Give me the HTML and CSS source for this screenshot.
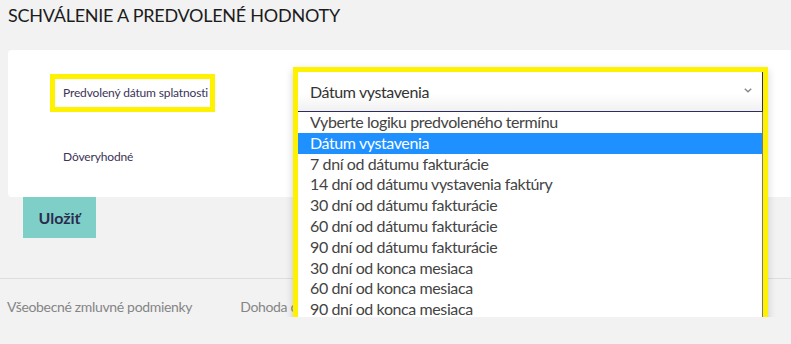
FILE: index.html
```html
<!DOCTYPE html>
<html lang="sk">
<head>
<meta charset="utf-8">
<title>Schválenie a predvolené hodnoty</title>
<link rel="stylesheet" href="styles.css">
</head>
<body>
<h1 class="title">SCHVÁLENIE A PREDVOLENÉ HODNOTY</h1>
<section class="card">
  <div class="label-box">Predvolený dátum splatnosti</div>
  <div class="select-field">
    <div class="annot">
      <div class="select-display">
        <span>Dátum vystavenia</span>
        <svg class="chev" width="8" height="5" viewBox="0 0 8 5"><polyline points="0.8,0.8 4,3.8 7.2,0.8" fill="none" stroke="#8a8a8a" stroke-width="1.5"/></svg>
      </div>
      <ul class="options">
        <li>Vyberte logiku predvoleného termínu</li>
        <li class="active">Dátum vystavenia</li>
        <li>7 dní od dátumu fakturácie</li>
        <li>14 dní od dátumu vystavenia faktúry</li>
        <li>30 dní od dátumu fakturácie</li>
        <li>60 dní od dátumu fakturácie</li>
        <li>90 dní od dátumu fakturácie</li>
        <li>30 dní od konca mesiaca</li>
        <li>60 dní od konca mesiaca</li>
        <li>90 dní od konca mesiaca</li>
      </ul>
    </div>
  </div>
  <div class="label-plain">Dôveryhodné</div>
</section>
<button class="save">Uložiť</button>
<footer class="footer">
  <a>Všeobecné zmluvné podmienky</a>
  <a>Dohoda o spracúvaní osobných údajov</a>
</footer>
</body>
</html>
```
FILE: styles.css
```css
html, body {
  margin: 0;
  padding: 0;
  background: #f2f2f2;
  font-family: Lato, "Noto Sans", sans-serif;
  overflow: hidden;
}
.title {
  margin: 3px 0 0 8px;
  font-size: 18px;
  line-height: 24px;
  font-weight: 400;
  color: #1c1c1c;
  letter-spacing: -0.25px;
}
.card {
  margin: 23px 0 0 8px;
  width: 800px;
  box-sizing: border-box;
  background: #fff;
  border-radius: 4px;
  display: grid;
  grid-template-columns: 248px 465px;
  grid-template-rows: 40px auto;
  row-gap: 37px;
  padding: 22px 0 32px 42px;
}
.label-box {
  margin-top: 2px;
  width: 165px;
  height: 38px;
  box-sizing: border-box;
  border: 5px solid #fff200;
  padding-left: 8px;
  font-size: 12px;
  line-height: 28px;
  letter-spacing: -0.15px;
  color: #3c3358;
  white-space: nowrap;
}
.select-field {
  position: relative;
  height: 40px;
}
.annot {
  position: absolute;
  left: -5px;
  top: -5px;
  width: 475px;
  height: 258px;
  box-sizing: border-box;
  border: 5px solid #fff200;
  box-shadow: 0 3px 8px rgba(0,0,0,0.18);
  background: #fff;
  z-index: 2;
}
.select-display {
  height: 40px;
  box-sizing: border-box;
  border-right: 1px solid #2d2d5e;
  border-bottom: 1px solid #2d2d5e;
  background: linear-gradient(#fff 55%, #f1f1f1);
  display: flex;
  align-items: center;
  justify-content: space-between;
  padding: 0 10px 0 12px;
  font-size: 16px;
  letter-spacing: -0.4px;
  color: #333;
}
.chev { margin-top: -2px; }
.options {
  list-style: none;
  margin: 0;
  padding: 0;
  border-right: 1px solid #7a7a7a;
  height: 208px;
  overflow: hidden;
}
.options li {
  height: 20.8px;
  line-height: 20.8px;
  padding-left: 12px;
  font-size: 16px;
  letter-spacing: -0.4px;
  color: #444;
  white-space: nowrap;
}
.options li.active {
  background: #1e90ff;
  color: #fff;
}
.label-plain {
  grid-column: 1;
  padding-left: 13px;
  font-size: 12px;
  line-height: 16px;
  letter-spacing: -0.15px;
  color: #3c3358;
}
.save {
  display: block;
  margin: 0 0 0 23px;
  width: 73px;
  height: 41px;
  border: none;
  border-radius: 0;
  background: #7ecfc7;
  font-family: Lato, "Noto Sans", sans-serif;
  font-weight: 700;
  font-size: 16px;
  color: #2b2d4f;
  padding: 0;
}
.footer {
  margin-top: 40px;
  border-top: 1px solid #dedede;
  padding: 18px 0 0 7px;
  display: flex;
  gap: 48px;
  font-size: 14px;
  line-height: 20px;
  letter-spacing: -0.33px;
  color: #858585;
  white-space: nowrap;
}
```
